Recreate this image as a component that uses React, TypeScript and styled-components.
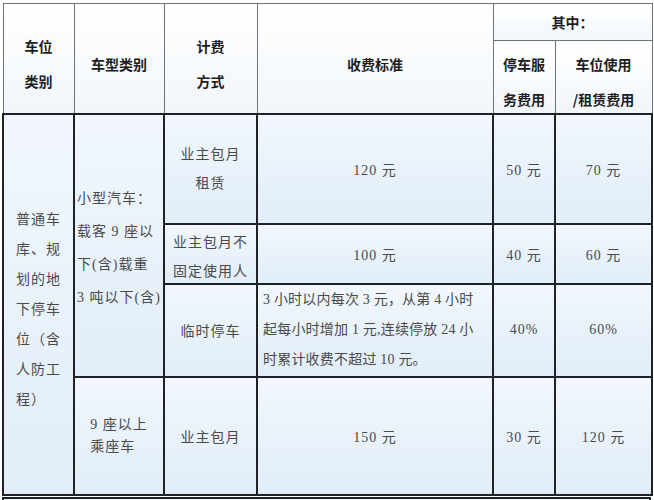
import React from 'react';
import styled, { createGlobalStyle } from 'styled-components';

const GlobalStyle = createGlobalStyle`
  html, body {
    margin: 0;
    padding: 0;
    background: #ffffff;
  }
  body {
    width: 654px;
    height: 500px;
    overflow: hidden;
  }
`;

const Page = styled.div`
  padding: 3px 0 0 2px;
  width: 650px;
`;

const Table = styled.table`
  width: 649px;
  table-layout: fixed;
  border-collapse: collapse;
  font-family: "Liberation Serif", "Noto Sans CJK SC", serif;
`;

const HeadCell = styled.th<{ $lh?: number }>`
  border: 1px solid #6f7377;
  background: linear-gradient(#ffffff, #f1f6fb);
  color: #1e1e1e;
  font-family: "Noto Sans CJK SC", "Liberation Sans", sans-serif;
  font-weight: 700;
  font-size: 14px;
  line-height: ${p => p.$lh ?? 20}px;
  text-align: center;
  vertical-align: middle;
  padding: 0;
`;

const HeadText = styled.div<{ $shift: number }>`
  transform: translateY(${p => p.$shift}px);
`;

const BodyCell = styled.td<{ $left?: boolean }>`
  border: 2px solid #1f2226;
  background: linear-gradient(#f1f7fc, #e1edf8);
  color: #4a4a4a;
  font-size: 14px;
  letter-spacing: 1px;
  white-space: nowrap;
  text-align: ${p => (p.$left ? 'left' : 'center')};
  vertical-align: middle;
  padding: ${p => (p.$left ? '0 0 0 5px' : '0')};
  overflow: hidden;
`;

const Block = styled.div<{ $lh: number; $shift?: number }>`
  display: inline-block;
  text-align: left;
  line-height: ${p => p.$lh}px;
  transform: translateY(${p => p.$shift ?? 0}px);
`;

const Centered = styled.div<{ $lh: number; $shift?: number; $tight?: boolean }>`
  line-height: ${p => p.$lh}px;
  letter-spacing: ${p => (p.$tight ? '0.2px' : '1px')};
  transform: translateY(${p => p.$shift ?? 0}px);
`;

const Continuation = styled.div`
  margin-top: 1px;
  width: 645px;
  height: 20px;
  border: 2px solid #1f2226;
  border-bottom: none;
  background: linear-gradient(#eef5fb, #e3eef8);
`;

const lines = (arr: string[]) =>
  arr.map((t, i) => <div key={i}>{t}</div>);

export default function App() {
  return (
    <>
      <GlobalStyle />
      <Page>
        <Table>
          <colgroup>
            <col style={{ width: 71 }} />
            <col style={{ width: 90 }} />
            <col style={{ width: 93 }} />
            <col style={{ width: 236 }} />
            <col style={{ width: 62 }} />
            <col style={{ width: 97 }} />
          </colgroup>
          <thead>
            <tr style={{ height: 37 }}>
              <HeadCell rowSpan={2} $lh={35}>
                <HeadText $shift={6}>{lines(['车位', '类别'])}</HeadText>
              </HeadCell>
              <HeadCell rowSpan={2}>
                <HeadText $shift={6}>车型类别</HeadText>
              </HeadCell>
              <HeadCell rowSpan={2} $lh={35}>
                <HeadText $shift={6}>{lines(['计费', '方式'])}</HeadText>
              </HeadCell>
              <HeadCell rowSpan={2}>
                <HeadText $shift={6}>收费标准</HeadText>
              </HeadCell>
              <HeadCell colSpan={2}>其中：</HeadCell>
            </tr>
            <tr style={{ height: 73 }}>
              <HeadCell $lh={35}>
                <HeadText $shift={5}>{lines(['停车服', '务费用'])}</HeadText>
              </HeadCell>
              <HeadCell $lh={35}>
                <HeadText $shift={5}>{lines(['车位使用', '/租赁费用'])}</HeadText>
              </HeadCell>
            </tr>
          </thead>
          <tbody>
            <tr style={{ height: 110 }}>
              <BodyCell rowSpan={4}>
                <Block $lh={30} $shift={6}>
                  {lines(['普通车', '库、规', '划的地', '下停车', '位（含', '人防工', '程）'])}
                </Block>
              </BodyCell>
              <BodyCell rowSpan={3}>
                <Block $lh={33} $shift={3}>
                  {lines(['小型汽车：', '载客 9 座以', '下(含)载重', '3 吨以下(含)'])}
                </Block>
              </BodyCell>
              <BodyCell>
                <Centered $lh={29}>{lines(['业主包月', '租赁'])}</Centered>
              </BodyCell>
              <BodyCell>120 元</BodyCell>
              <BodyCell>50 元</BodyCell>
              <BodyCell>70 元</BodyCell>
            </tr>
            <tr style={{ height: 60 }}>
              <BodyCell>
                <Block $lh={29} $shift={3}>
                  {lines(['业主包月不', '固定使用人'])}
                </Block>
              </BodyCell>
              <BodyCell>100 元</BodyCell>
              <BodyCell>40 元</BodyCell>
              <BodyCell>60 元</BodyCell>
            </tr>
            <tr style={{ height: 93 }}>
              <BodyCell>临时停车</BodyCell>
              <BodyCell $left>
                <Centered $lh={30} $tight>
                  {lines([
                    '3 小时以内每次 3 元，从第 4 小时',
                    '起每小时增加 1 元,连续停放 24 小',
                    '时累计收费不超过 10 元。',
                  ])}
                </Centered>
              </BodyCell>
              <BodyCell>40%</BodyCell>
              <BodyCell>60%</BodyCell>
            </tr>
            <tr style={{ height: 118 }}>
              <BodyCell>
                <Block $lh={22}>{lines(['9 座以上', '乘座车'])}</Block>
              </BodyCell>
              <BodyCell>业主包月</BodyCell>
              <BodyCell>150 元</BodyCell>
              <BodyCell>30 元</BodyCell>
              <BodyCell>120 元</BodyCell>
            </tr>
          </tbody>
        </Table>
        <Continuation />
      </Page>
    </>
  );
}
